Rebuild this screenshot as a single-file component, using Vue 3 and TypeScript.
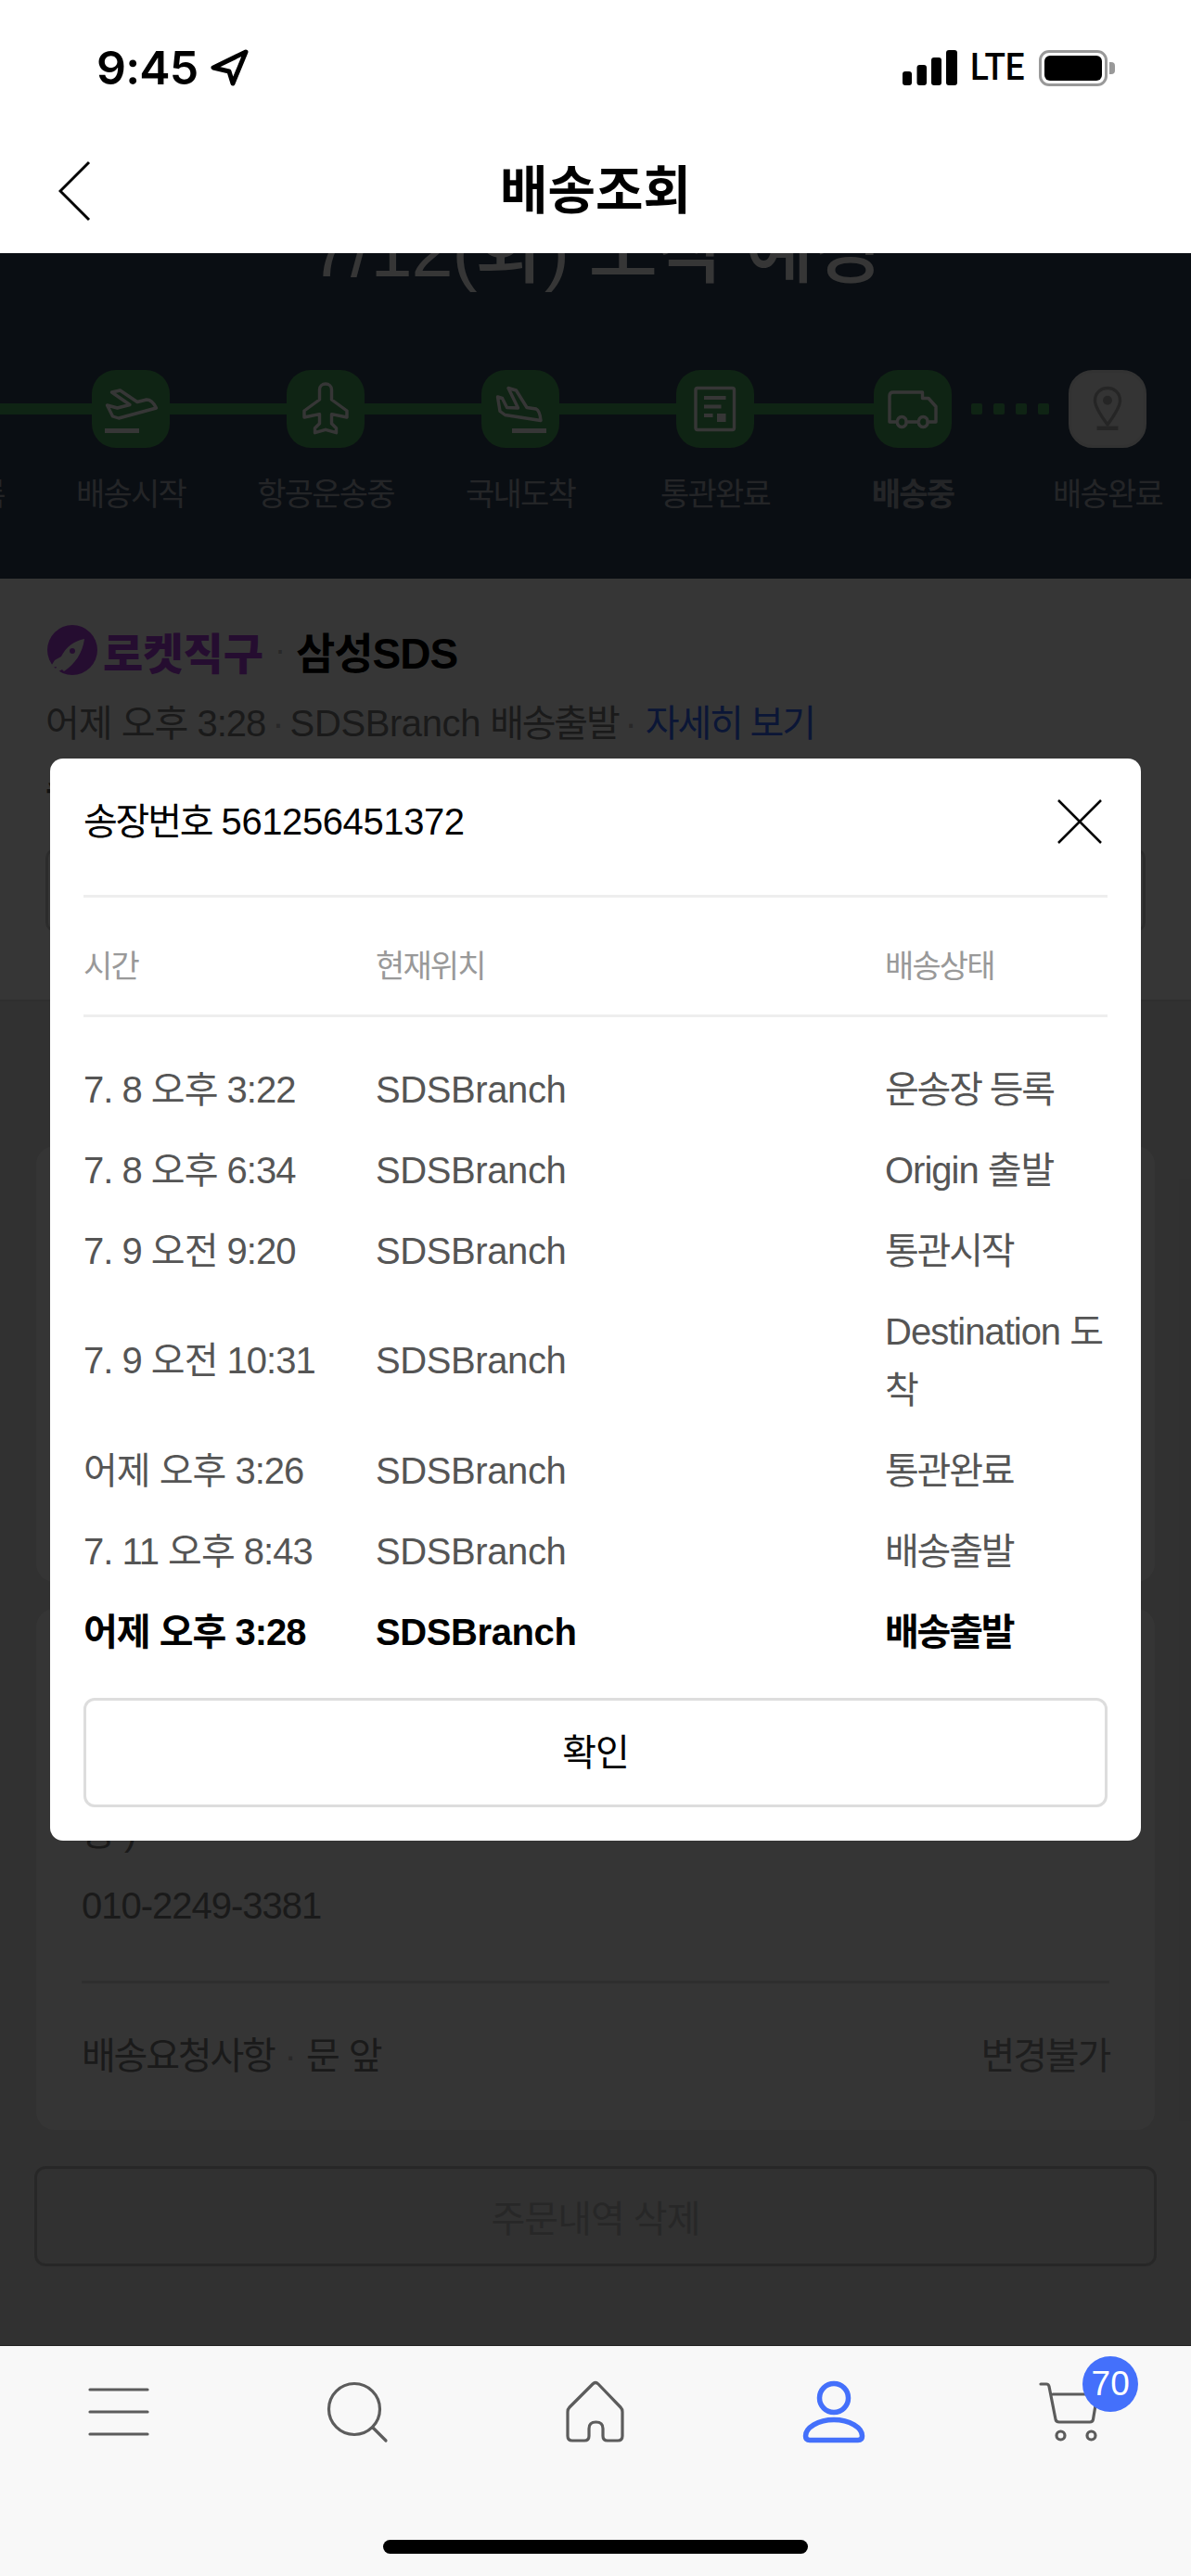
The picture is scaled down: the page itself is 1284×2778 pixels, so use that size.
<template>
  <div class="phone">
    <header class="topbar">
      <div class="status">
        <div class="status-left">
          <span class="clock">9:45</span>
          <svg class="arrow" width="42" height="40" viewBox="0 0 42 40">
            <path d="M38 3 L3 20 L20 24 L24 37 Z" />
          </svg>
        </div>
        <div class="status-right">
          <svg width="60" height="38" viewBox="0 0 60 38">
            <rect x="0" y="23" width="10" height="15" rx="3" />
            <rect x="15.500" y="16" width="10.500" height="22" rx="3" />
            <rect x="31" y="8" width="11" height="30" rx="3" />
            <rect x="47" y="0" width="12" height="38" rx="3" />
          </svg>
          <span class="lte">LTE</span>
          <div class="battery"><div class="battery-fill"></div></div>
          <div class="battery-nub"></div>
        </div>
      </div>
      <div class="appbar">
        <svg class="back" width="36" height="66" viewBox="0 0 36 66">
          <path d="M33 2 L2 33 L33 64" />
        </svg>
        <h1>배송조회</h1>
      </div>
    </header>

    <main class="content">
      <section class="hero">
        <div class="eta">7/12(화) 도착 예정</div>
        <div class="track">
          <div class="track-line"></div>
          <div class="track-dots"><i v-for="n in 4" :key="n"></i></div>
          <div
            v-for="step in steps"
            :key="step.label"
            class="step"
            :class="{ current: step.current, todo: step.todo }"
          >
            <div class="pill">
              <svg width="84" height="84" viewBox="0 0 84 84">
                <path class="icon-line" :d="step.outline" />
                <path class="icon-solid" :d="step.solid" />
              </svg>
            </div>
            <div class="step-label">{{ step.label }}</div>
          </div>
        </div>
      </section>

      <section class="summary">
        <div class="brand-row">
          <svg class="rocket" width="54" height="54" viewBox="0 0 54 54">
            <circle cx="27" cy="27" r="27" fill="#b040e0" />
            <path d="M40 15 C29 17 20 24 15 34 L8 38 L3 46 L10 45 L6 53 L16 48 L18 50 C30 42 38 30 40 15 Z" fill="#fff" />
            <circle cx="27" cy="28" r="3" fill="#b040e0" />
          </svg>
          <span class="brand">로켓직구</span>
          <span class="sep">·</span>
          <span class="carrier">삼성SDS</span>
        </div>
        <div class="latest">
          어제 오후 3:28<span class="sep">·</span><span class="latin">SDSBranch</span> <span class="ko">배송출발</span><span class="sep">·</span><span class="link ko">자세히 보기</span>
        </div>
        <div class="invoice">송장번호 561256451372</div>
        <div class="ghost-btn"></div>
      </section>

      <section class="lower">
        <div class="card card-a"></div>
        <div class="card card-b">
          <div class="addr">동 )</div>
          <div class="addr phone-no">010-2249-3381</div>
          <div class="card-line"></div>
          <div class="req">
            <span><span class="ko">배송요청사항</span><span class="sep req-sep">·</span>문 앞</span>
            <span class="req-right ko">변경불가</span>
          </div>
        </div>
        <div class="delete-btn">주문내역 삭제</div>
      </section>

      <div class="dim">
        <div class="modal">
          <div class="modal-head">
            <span><span class="ko">송장번호</span> <span class="latin">561256451372</span></span>
            <svg width="48" height="48" viewBox="0 0 48 48">
              <path d="M1 1 L47 47 M47 1 L1 47" />
            </svg>
          </div>
          <div class="grid grid-head">
            <span>시간</span>
            <span>현재위치</span>
            <span>배송상태</span>
          </div>
          <div class="rows">
            <div
              v-for="row in rows"
              :key="row.time"
              class="grid row"
              :class="{ last: row.last }"
            >
              <span>{{ row.time }}</span>
              <span class="latin">SDSBranch</span>
              <span :class="{ ko: !row.mixed }">{{ row.state }}</span>
            </div>
          </div>
          <button class="ok" type="button">확인</button>
        </div>
      </div>
    </main>

    <nav class="tabbar">
      <div class="tabs">
        <div class="tab">
          <svg width="90" height="90" viewBox="0 0 90 90">
            <path class="nav-line" d="M14 22 H76 M14 46 H76 M14 70 H76" />
          </svg>
        </div>
        <div class="tab">
          <svg width="90" height="90" viewBox="0 0 90 90">
            <circle class="nav-line" cx="42" cy="43" r="27.500" />
            <path class="nav-line" d="M62 63 L76 77" />
          </svg>
        </div>
        <div class="tab">
          <svg width="90" height="90" viewBox="0 0 90 90">
            <path class="nav-line" d="M42 16 L17 41 Q15 43 15 46 V72 Q15 77 20 77 H33 Q38 77 38 72 V64 Q38 57 45.500 57 Q53 57 53 64 V72 Q53 77 58 77 H69 Q74 77 74 72 V46 Q74 43 72 41 L48 16 Q45 13 42 16 Z" />
          </svg>
        </div>
        <div class="tab">
          <svg width="90" height="90" viewBox="0 0 90 90">
            <circle class="nav-blue" cx="45" cy="31" r="15.500" />
            <path class="nav-blue" d="M45 54.500 C28 54.500 14.500 63 14.500 72 Q14.500 76.500 19 76.500 H71 Q75.500 76.500 75.500 72 C75.500 63 62 54.500 45 54.500 Z" />
          </svg>
        </div>
        <div class="tab cart">
          <svg width="90" height="90" viewBox="0 0 90 90">
            <path class="nav-line" d="M11 16 H17 Q19.500 16 20 18.500 L27 54 Q27.500 57 31 57 H64 Q67 57 67.500 54 L72 27 M24 27 H75" />
            <circle class="nav-line" cx="32.500" cy="71.500" r="4.500" />
            <circle class="nav-line" cx="65.500" cy="71.500" r="4.500" />
          </svg>
          <span class="badge">70</span>
        </div>
      </div>
      <div class="home-bar"></div>
    </nav>
  </div>
</template>

<script setup lang="ts">
interface Step {
  label: string
  outline: string
  solid: string
  current?: boolean
  todo?: boolean
}

interface TrackRow {
  time: string
  state: string
  mixed?: boolean
  last?: boolean
}

const takeoffBar = 'M14 63 H51 V68 H14 Z'
const landingBar = 'M33 63 H70 V68 H33 Z'

const steps: Step[] = [
  { label: '운송장등록', outline: '', solid: '' },
  {
    label: '배송시작',
    outline: 'M21.500 24 L30.500 22 L49 34.500 L59 32 Q65 32 69.500 41 L29 52 L22.500 50 L16.500 38 L27.500 41 L41 37.500 Z',
    solid: takeoffBar,
  },
  {
    label: '항공운송중',
    outline: 'M42 15 C38.500 15 35.500 17.500 35.500 21 V32 L19 44 V51 L35.500 47.700 V57.700 L30.500 62.700 V67.700 L42 64.300 L53.500 67.700 V62.700 L48.500 57.700 V47.700 L65 51 V44 L48.500 32 V21 C48.500 17.500 45.500 15 42 15 Z',
    solid: '',
  },
  {
    label: '국내도착',
    outline: 'M17.500 29 L22.500 30.500 L27.500 40.500 L39.500 41 L29 19.500 L37.500 22 L49 40.500 L59 42 Q63 44 64 54.500 L25.500 48.500 L20 44.500 Z',
    solid: landingBar,
  },
  {
    label: '통관완료',
    outline: 'M23 19.500 H60.500 Q62.500 19.500 62.500 21.500 V62.500 Q62.500 64.500 60.500 64.500 H23 Q21 64.500 21 62.500 V21.500 Q21 19.500 23 19.500 Z',
    solid: 'M30 28 H53.500 V32 H30 Z M30 37.500 H48.500 V41.500 H30 Z M30 47 H39.500 V51 H30 Z M44 47 H53.500 V56 H44 Z',
  },
  {
    label: '배송중',
    outline: 'M25 56 H17 V28 Q17 24 21 24 H52.500 V30.500 H59 L67 39.500 V56 H58 M35 56 H48.500 M25.500 56 A4.800 4.800 0 1 0 35 56 A4.800 4.800 0 1 0 25.500 56 M48.500 56 A4.800 4.800 0 1 0 58 56 A4.800 4.800 0 1 0 48.500 56',
    solid: '',
    current: true,
  },
  {
    label: '배송완료',
    outline: 'M42 19.500 C34 19.500 28.500 25.500 28.500 33 C28.500 41 37 52 42 59 C47 52 55.500 41 55.500 33 C55.500 25.500 50 19.500 42 19.500 Z',
    solid: 'M37 32.700 A5 5 0 1 0 47 32.700 A5 5 0 1 0 37 32.700 Z M30.500 60.500 H53.500 V65 H30.500 Z',
    todo: true,
  },
]

const rows: TrackRow[] = [
  { time: '7. 8 오후 3:22', state: '운송장 등록' },
  { time: '7. 8 오후 6:34', state: 'Origin 출발', mixed: true },
  { time: '7. 9 오전 9:20', state: '통관시작' },
  { time: '7. 9 오전 10:31', state: 'Destination 도착', mixed: true },
  { time: '어제 오후 3:26', state: '통관완료' },
  { time: '7. 11 오후 8:43', state: '배송출발' },
  { time: '어제 오후 3:28', state: '배송출발', last: true },
]
</script>

<style>
html,
body {
  margin: 0;
  background: #fff;
}
</style>

<style scoped>
.phone {
  width: 1284px;
  height: 2778px;
  display: flex;
  flex-direction: column;
  overflow: hidden;
  background: #fff;
  color: #000;
  font-family: "Liberation Sans", "Noto Sans CJK KR", sans-serif;
  font-size: 40px;
  letter-spacing: -1px;
}

.ko {
  letter-spacing: -2.200px;
}

.latin {
  letter-spacing: -0.400px;
}

/* top */
.topbar {
  height: 273px;
  flex: none;
  background: #fff;
}

.status {
  height: 135px;
  box-sizing: border-box;
  padding: 53px 82px 0 104px;
  display: flex;
  justify-content: space-between;
  align-items: flex-start;
}

.status-left {
  display: flex;
  align-items: center;
  gap: 14px;
  height: 40px;
}

.clock {
  font-family: Inter, sans-serif;
  font-size: 50px;
  font-weight: 600;
  letter-spacing: -0.800px;
  line-height: 40px;
}

.arrow path {
  fill: none;
  stroke: #000;
  stroke-width: 5;
  stroke-linejoin: round;
}

.status-right {
  display: flex;
  align-items: center;
  height: 40px;
}

.status-right svg {
  fill: #000;
}

.lte {
  width: 62px;
  margin-left: 13px;
  font-family: Roboto, sans-serif;
  font-size: 40px;
  font-weight: 500;
  letter-spacing: 0;
  line-height: 40px;
  transform: scaleX(0.92);
  transform-origin: left center;
}

.battery {
  width: 74px;
  height: 39px;
  margin-left: 12px;
  box-sizing: border-box;
  border: 3px solid #999;
  border-radius: 11px;
  padding: 3px;
}

.battery-fill {
  height: 100%;
  background: #000;
  border-radius: 6px;
}

.battery-nub {
  width: 6px;
  height: 13px;
  margin-left: 2px;
  background: #999;
  border-radius: 0 4px 4px 0;
}

.appbar {
  height: 138px;
  display: flex;
  align-items: center;
  justify-content: center;
  position: relative;
}

.back {
  position: absolute;
  left: 63px;
  top: 38px;
}

.back path {
  fill: none;
  stroke: #000;
  stroke-width: 3;
}

.appbar h1 {
  margin: 4px 0 0;
  font-size: 56px;
  font-weight: 700;
  letter-spacing: 0;
  line-height: 70px;
}

/* dimmed page */
.content {
  flex: 1;
  min-height: 0;
  position: relative;
  overflow: hidden;
  background: #e5e5e5;
}

.hero {
  height: 351px;
  overflow: hidden;
  background: #30435a;
  color: #fff;
}

.eta {
  margin-top: -53px;
  height: 100px;
  line-height: 100px;
  text-align: center;
  font-size: 81px;
  font-weight: 500;
}

.track {
  position: relative;
  display: flex;
  margin: 79px 0 0 -174px;
}

.track-line {
  position: absolute;
  left: 0;
  top: 36px;
  width: 1117px;
  height: 12px;
  background: #4aa85e;
}

.track-dots {
  position: absolute;
  left: 1221px;
  top: 36px;
  display: flex;
  gap: 12px;
}

.track-dots i {
  width: 12px;
  height: 12px;
  border-radius: 2px;
  background: #4aa85e;
}

.step {
  position: relative;
  flex: none;
  width: 210px;
  display: flex;
  flex-direction: column;
  align-items: center;
}

.step.current {
  margin-left: 3px;
}

.pill {
  width: 84px;
  height: 84px;
  border-radius: 26px;
  background: #4aa85e;
}

.pill svg {
  display: block;
}

.icon-line {
  fill: none;
  stroke: #fff;
  stroke-width: 3.400;
  stroke-linejoin: round;
}

.icon-solid {
  fill: #fff;
}

.todo .pill {
  background: #f4f4f4;
  box-sizing: border-box;
  border: 3px solid #ebebeb;
}

.todo .pill svg {
  margin: -3px;
}

.todo .icon-line {
  stroke: #b0b0b0;
}

.todo .icon-solid {
  fill: #b0b0b0;
}

.step-label {
  margin-top: 25px;
  font-size: 34px;
  letter-spacing: -1.800px;
  line-height: 50px;
  color: #a8aeba;
  white-space: nowrap;
}

.current .step-label {
  font-weight: 700;
}

.summary {
  height: 456px;
  box-sizing: border-box;
  padding: 50px 49px 0;
  background: #fff;
  border-bottom: 2px solid #dbdbdb;
}

.brand-row {
  display: flex;
  align-items: center;
  height: 54px;
}

.rocket {
  margin: 0 6px 0 2px;
  flex: none;
}

.brand {
  font-size: 47px;
  font-weight: 900;
  color: #b040e0;
  letter-spacing: 0;
}

.carrier {
  font-size: 46px;
  font-weight: 700;
}

.brand-row .sep {
  margin: 0 12px;
  font-size: 36px;
}

.sep {
  margin: 0 7px;
  color: #bbb;
}

.latest {
  margin-top: 22px;
  line-height: 60px;
  color: #7c7c7c;
}

.link {
  margin-left: 3px;
  color: #346aff;
}

.invoice {
  margin-top: 13px;
  line-height: 60px;
  font-weight: 700;
  color: #555;
}

.ghost-btn {
  margin-top: 32px;
  height: 90px;
  box-sizing: border-box;
  border: 3px solid #cfcfcf;
  border-radius: 10px;
}

.lower {
  padding: 0 39px;
}

.card {
  background: #f8f8f8;
  border-radius: 20px;
}

.card-a {
  height: 470px;
  margin-top: 156px;
}

.card-b {
  margin-top: 29px;
  height: 562px;
  box-sizing: border-box;
  padding: 211px 49px 0;
}

.addr {
  line-height: 60px;
  color: #7c7c7c;
}

.phone-no {
  margin-top: 19px;
}

.card-line {
  margin-top: 51px;
  height: 3px;
  background: #d8d8d8;
}

.req {
  margin-top: 48px;
  display: flex;
  justify-content: space-between;
  line-height: 60px;
  color: #7c7c7c;
}

.req-sep {
  margin: 0 11px;
}

.req-right {
  color: #8f8f8f;
}

.delete-btn {
  margin: 39px -2px 0;
  height: 108px;
  box-sizing: border-box;
  border: 3px solid #bababa;
  border-radius: 12px;
  display: flex;
  align-items: center;
  justify-content: center;
  color: #bababa;
}

.dim {
  position: absolute;
  inset: 0;
  display: flex;
  align-items: center;
  justify-content: center;
  background: rgba(0, 0, 0, 0.79);
}

.modal {
  width: 1176px;
  height: 1167px;
  box-sizing: border-box;
  padding: 0 36px;
  border-radius: 14px;
  background: #fff;
}

.modal-head {
  display: flex;
  justify-content: space-between;
  align-items: center;
  padding: 38px 6px 49px 0;
  line-height: 60px;
  border-bottom: 3px solid #eee;
}

.modal-head svg {
  display: block;
}

.modal-head path {
  fill: none;
  stroke: #000;
  stroke-width: 2.500;
}

.grid {
  display: grid;
  grid-template-columns: 315px 549px 240px;
  align-items: center;
}

.grid-head {
  padding: 44px 0 22px;
  font-size: 34px;
  letter-spacing: -1.900px;
  line-height: 60px;
  color: #999;
  border-bottom: 3px solid #eee;
}

.rows {
  padding-top: 35px;
}

.row {
  padding: 12px 0;
  line-height: 63px;
  color: #555;
}

.row.last {
  font-weight: 700;
  color: #000;
}

.ok {
  display: block;
  width: 100%;
  height: 118px;
  margin-top: 27px;
  padding: 0 0 6px;
  box-sizing: border-box;
  border: 3px solid #ddd;
  border-radius: 12px;
  background: #fff;
  color: #000;
  font: inherit;
  letter-spacing: inherit;
}

/* bottom */
.tabbar {
  height: 249px;
  flex: none;
  box-sizing: border-box;
  padding-top: 25px;
  border-top: 1px solid #222;
  background: #f8f8f8;
  display: flex;
  flex-direction: column;
  align-items: center;
}

.tabs {
  width: 100%;
  display: grid;
  grid-template-columns: repeat(5, 1fr);
}

.tab {
  position: relative;
  display: flex;
  justify-content: center;
}

.tab svg {
  display: block;
}

.nav-line {
  fill: none;
  stroke: #5c5c5c;
  stroke-width: 3.200;
  stroke-linecap: round;
  stroke-linejoin: round;
}

.nav-blue {
  fill: none;
  stroke: #4470fb;
  stroke-width: 5.500;
}

.badge {
  position: absolute;
  left: 140px;
  top: -14px;
  width: 60px;
  height: 60px;
  border-radius: 50%;
  background: #4470fb;
  color: #fff;
  font-size: 37px;
  letter-spacing: 0;
  line-height: 60px;
  text-align: center;
}

.home-bar {
  width: 458px;
  height: 15px;
  margin-top: 94px;
  border-radius: 8px;
  background: #000;
}
</style>
